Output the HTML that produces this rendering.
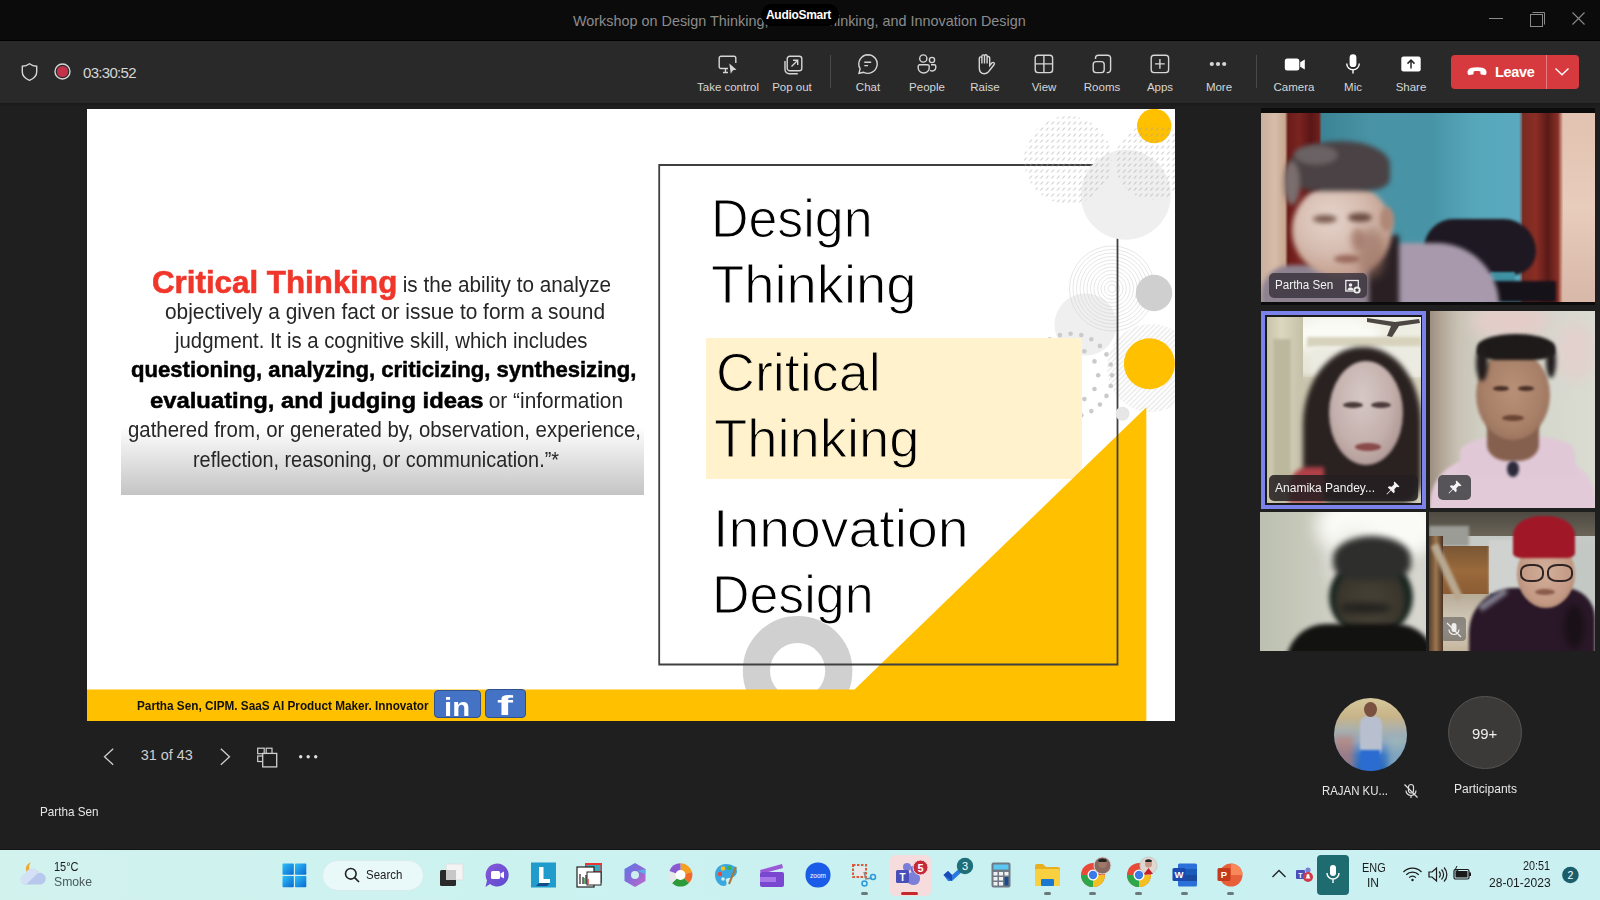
<!DOCTYPE html>
<html><head><meta charset="utf-8">
<style>
*{margin:0;padding:0;box-sizing:border-box}
html,body{width:1600px;height:900px;overflow:hidden;background:#1f1f1f;font-family:"Liberation Sans",sans-serif}
.a{position:absolute}
#title{left:0;top:0;width:1600px;height:41px;background:#0b0b0b;border-bottom:1px solid #000}
#toolbar{left:0;top:41px;width:1600px;height:62px;background:#292929}
.tl{position:absolute;top:81px;color:#d6d6d6;font-size:11.5px;white-space:nowrap;transform:translateX(-50%)}
.ic{position:absolute;top:52px;width:24px;height:24px;transform:translateX(-50%)}
#slide{left:87px;top:109px;width:1088px;height:612px;background:#fff;overflow:hidden}
.tile{position:absolute;overflow:hidden}
#taskbar{left:0;top:850px;width:1600px;height:50px;background:linear-gradient(90deg,#d9efef,#cdeff0 50%,#d3eff1)}
</style></head><body>

<div id="title" class="a">
 <div class="a" style="left:573px;top:12.5px;font-size:14.4px;color:#8c8c8c;white-space:nowrap">Workshop on Design Thinking, Critical Thinking, and Innovation Design</div>
 <div class="a" style="left:761px;top:4px;width:78px;height:22px;border-radius:11px;background:#000"></div>
 <div class="a" style="left:766px;top:8px;font-size:12px;font-weight:bold;color:#fff;letter-spacing:-0.3px">AudioSmart</div>
 <svg class="a" style="left:1480px;top:8px" width="110" height="24" viewBox="0 0 110 24">
  <line x1="9" y1="10.5" x2="23" y2="10.5" stroke="#8a8a8a" stroke-width="1"/>
  <rect x="50.5" y="6.5" width="12" height="12" fill="none" stroke="#8a8a8a" stroke-width="1"/>
  <path d="M52.5 4.5 H64.5 V16.5" fill="none" stroke="#8a8a8a" stroke-width="1"/>
  <path d="M92.5 4.5 L104.5 16.5 M104.5 4.5 L92.5 16.5" stroke="#8a8a8a" stroke-width="1.1"/>
 </svg>
</div>
<div id="toolbar" class="a"></div>
<div id="tbshadow" class="a" style="left:0;top:103px;width:1600px;height:4px;background:linear-gradient(180deg,#191919,#1f1f1f)"></div>
<svg class="a" style="left:20px;top:62px" width="20" height="20" viewBox="0 0 20 20"><path d="M9.5 1.8 C7.5 3.3 5 4.2 2.3 4.2 V10 C2.3 14 5 16.5 9.5 18.3 C14 16.5 16.7 14 16.7 10 V4.2 C14 4.2 11.5 3.3 9.5 1.8Z" stroke="#d6d6d6" stroke-width="1.4" fill="none"/></svg>
<svg class="a" style="left:52px;top:61px" width="22" height="22" viewBox="0 0 22 22"><circle cx="10.5" cy="10.5" r="7.5" stroke="#d6d6d6" stroke-width="1.4" fill="none" stroke-width="1.6"/><circle cx="10.5" cy="10.5" r="5.6" fill="#c4314b"/></svg>
<div class="a" style="left:83px;top:64px;font-size:15px;color:#d6d6d6;letter-spacing:-0.7px">03:30:52</div>
<svg class="a" style="left:717px;top:54px" width="22" height="22" viewBox="0 0 22 22"><path d="M11 14.5 H4 a1.8 1.8 0 0 1 -1.8 -1.8 V4 a1.8 1.8 0 0 1 1.8 -1.8 H17 a1.8 1.8 0 0 1 1.8 1.8 V9" stroke="#d6d6d6" stroke-width="1.4" fill="none"/><path d="M6 18.5 H11 M8.5 14.5 V18.5" stroke="#d6d6d6" stroke-width="1.4" fill="none"/><path d="M12.3 9.5 L19.5 15.8 L16 16.2 L13.8 19.8 Z" fill="#d6d6d6"/></svg>
<svg class="a" style="left:782px;top:54px" width="22" height="22" viewBox="0 0 22 22"><rect x="5.2" y="2.2" width="14.6" height="14.6" rx="2.6" stroke="#d6d6d6" stroke-width="1.4" fill="none"/><path d="M3 7 V15.5 a4.2 4.2 0 0 0 4.2 4.2 H15.8" stroke="#d6d6d6" stroke-width="1.4" fill="none"/><path d="M9.5 12.5 L15.5 6.5 M11 6.3 H15.7 V11" stroke="#d6d6d6" stroke-width="1.4" fill="none"/></svg>
<div class="a" style="left:830px;top:55px;width:1px;height:33px;background:#4a4a4a"></div>
<svg class="a" style="left:857px;top:53px" width="22" height="22" viewBox="0 0 22 22"><path d="M11 1.7 a9.3 9.3 0 1 1 -4.3 17.6 L2 20.3 L3.1 15.7 A9.3 9.3 0 0 1 11 1.7Z" stroke="#d6d6d6" stroke-width="1.4" fill="none"/><path d="M7.3 9.2 H14.2 M7.3 12.6 H11" stroke="#d6d6d6" stroke-width="1.4" fill="none"/></svg>
<svg class="a" style="left:916px;top:53px" width="22" height="22" viewBox="0 0 22 22"><circle cx="7.3" cy="5.5" r="3.6" stroke="#d6d6d6" stroke-width="1.4" fill="none"/><circle cx="16" cy="7" r="2.6" stroke="#d6d6d6" stroke-width="1.4" fill="none"/><path d="M3 11.7 H11.6 a1.6 1.6 0 0 1 1.6 1.6 V15 a5.5 5 0 0 1 -11 0 V13.3 a1.6 1.6 0 0 1 1.6 -1.6Z" stroke="#d6d6d6" stroke-width="1.4" fill="none"/><path d="M15 11.7 H18.2 a1.6 1.6 0 0 1 1.6 1.6 V14.5 a3.6 3.5 0 0 1 -5.8 2.8" stroke="#d6d6d6" stroke-width="1.4" fill="none"/></svg>
<svg class="a" style="left:974px;top:53px" width="22" height="22" viewBox="0 0 22 22"><path d="M5.3 12.5 V5.2 a1.3 1.3 0 0 1 2.6 0 V10.5 V3.2 a1.3 1.3 0 0 1 2.6 0 V10.5 V3 a1.3 1.3 0 0 1 2.6 0 V10.5 V4.8 a1.3 1.3 0 0 1 2.6 0 V12.5 L18 9.8 a1.4 1.4 0 0 1 2 2 L15.5 17.5 C14.3 19.5 12.7 20.7 10.5 20.7 C7.2 20.7 5.3 18.3 5.3 15 Z" stroke="#d6d6d6" stroke-width="1.4" fill="none" stroke-width="1.3"/></svg>
<svg class="a" style="left:1033px;top:53px" width="22" height="22" viewBox="0 0 22 22"><rect x="2.2" y="2.2" width="17.4" height="17.4" rx="2.8" stroke="#d6d6d6" stroke-width="1.4" fill="none"/><path d="M10.9 2.2 V19.6 M2.2 10.9 H19.6" stroke="#d6d6d6" stroke-width="1.4" fill="none"/></svg>
<svg class="a" style="left:1091px;top:53px" width="22" height="22" viewBox="0 0 22 22"><path d="M4.5 6 V5 a2.8 2.8 0 0 1 2.8 -2.8 H16.8 a2.8 2.8 0 0 1 2.8 2.8 V16.8 a2.8 2.8 0 0 1 -2.8 2.8 H15.6" stroke="#d6d6d6" stroke-width="1.4" fill="none"/><rect x="2.2" y="8.6" width="11" height="11" rx="2.8" stroke="#d6d6d6" stroke-width="1.4" fill="none"/></svg>
<svg class="a" style="left:1149px;top:53px" width="22" height="22" viewBox="0 0 22 22"><rect x="2.2" y="2.2" width="17.4" height="17.4" rx="2.8" stroke="#d6d6d6" stroke-width="1.4" fill="none"/><path d="M10.9 6 V15.8 M6 10.9 H15.8" stroke="#d6d6d6" stroke-width="1.4" fill="none" stroke-width="1.6"/></svg>
<svg class="a" style="left:1207px;top:53px" width="22" height="22" viewBox="0 0 22 22"><circle cx="4.8" cy="11" r="2.1" fill="#d6d6d6"/><circle cx="11" cy="11" r="2.1" fill="#d6d6d6"/><circle cx="17.2" cy="11" r="2.1" fill="#d6d6d6"/></svg>
<div class="a" style="left:1256px;top:55px;width:1px;height:33px;background:#4a4a4a"></div>
<svg class="a" style="left:1283px;top:53px" width="24" height="22" viewBox="0 0 24 22"><rect x="1.8" y="5.5" width="14.5" height="12" rx="2.5" fill="#ffffff"/><path d="M17.2 9.3 L21.8 6.5 V16.5 L17.2 13.7 Z" fill="#ffffff"/></svg>
<svg class="a" style="left:1342px;top:53px" width="22" height="22" viewBox="0 0 22 22"><rect x="7.6" y="1.3" width="6.8" height="12.8" rx="3.4" fill="#ffffff"/><path d="M4.7 10.5 a6.3 6.3 0 0 0 12.6 0 M11 16.8 V20.5" stroke="#ffffff" stroke-width="1.4" fill="none"/></svg>
<svg class="a" style="left:1400px;top:53px" width="22" height="22" viewBox="0 0 22 22"><rect x="1.3" y="3.5" width="19.4" height="15" rx="2.2" fill="#ffffff"/><path d="M11 15.5 V7.3 M7.5 10.6 L11 7.1 L14.5 10.6" stroke="#292929" stroke-width="1.5" fill="none"/></svg>
<div class="tl" style="left:728px">Take control</div>
<div class="tl" style="left:792px">Pop out</div>
<div class="tl" style="left:868px">Chat</div>
<div class="tl" style="left:927px">People</div>
<div class="tl" style="left:985px">Raise</div>
<div class="tl" style="left:1044px">View</div>
<div class="tl" style="left:1102px">Rooms</div>
<div class="tl" style="left:1160px">Apps</div>
<div class="tl" style="left:1219px">More</div>
<div class="tl" style="left:1294px">Camera</div>
<div class="tl" style="left:1353px">Mic</div>
<div class="tl" style="left:1411px">Share</div>
<div class="a" style="left:1451px;top:55px;width:128px;height:34px;border-radius:4px;background:#d73a3e"></div>
<div class="a" style="left:1546px;top:55px;width:1px;height:34px;background:#e8797b"></div>
<svg class="a" style="left:1465px;top:63px" width="24" height="18" viewBox="0 0 24 18"><path d="M2.5 9.8 C2 7.6 3.8 5.5 6.5 4.8 C9.8 3.9 14.2 3.9 17.5 4.8 C20.2 5.5 22 7.6 21.5 9.8 L21.2 11 C21 11.8 20.2 12.3 19.4 12.1 L16.6 11.6 C15.9 11.5 15.4 10.9 15.4 10.2 L15.4 8.5 C13.3 7.9 10.7 7.9 8.6 8.5 L8.6 10.2 C8.6 10.9 8.1 11.5 7.4 11.6 L4.6 12.1 C3.8 12.3 3 11.8 2.8 11 Z" fill="#fff"/></svg>
<div class="a" style="left:1495px;top:64px;font-size:14.5px;font-weight:bold;color:#fff;letter-spacing:-0.3px">Leave</div>
<svg class="a" style="left:1553px;top:66px" width="18" height="12" viewBox="0 0 18 12"><path d="M2.5 2.5 L9 8.8 L15.5 2.5" stroke="#fff" stroke-width="1.4" fill="none"/></svg>
<div id="slide" class="a">
<div class="a" style="left:34px;top:150px;width:523px;height:235.5px;background:linear-gradient(180deg,#fff 0%,#fff 71%,#eeeeee 79%,#d8d8d8 90%,#c4c4c4 100%)"></div>
<div class="a" style="left:64.7px;top:156.9px;font-size:32px;line-height:32px;font-weight:bold;color:#f0362a;white-space:pre;transform:scaleX(0.9785);transform-origin:0 0;-webkit-text-stroke:0.6px #f0362a;">Critical Thinking</div>
<div class="a" style="left:310.0px;top:165.4px;font-size:22px;line-height:22px;font-weight:normal;color:#262626;white-space:pre;transform:scaleX(0.9408);transform-origin:0 0;"> is the ability to analyze</div>
<div class="a" style="left:78.0px;top:191.7px;font-size:22px;line-height:22px;font-weight:normal;color:#262626;white-space:pre;transform:scaleX(0.9494);transform-origin:0 0;">objectively a given fact or issue to form a sound</div>
<div class="a" style="left:88.3px;top:220.7px;font-size:22px;line-height:22px;font-weight:normal;color:#262626;white-space:pre;transform:scaleX(0.9242);transform-origin:0 0;">judgment. It is a cognitive skill, which includes</div>
<div class="a" style="left:43.6px;top:250.4px;font-size:22px;line-height:22px;font-weight:bold;color:#000;white-space:pre;transform:scaleX(1.0035);transform-origin:0 0;-webkit-text-stroke:0.5px #000;">questioning, analyzing, criticizing, synthesizing,</div>
<div class="a" style="left:62.5px;top:281.4px;font-size:22px;line-height:22px;font-weight:bold;color:#000;white-space:pre;transform:scaleX(1.0826);transform-origin:0 0;-webkit-text-stroke:0.5px #000;">evaluating, and judging ideas</div>
<div class="a" style="left:396.0px;top:280.9px;font-size:22px;line-height:22px;font-weight:normal;color:#262626;white-space:pre;transform:scaleX(0.9463);transform-origin:0 0;"> or “information</div>
<div class="a" style="left:40.9px;top:310.0px;font-size:22px;line-height:22px;font-weight:normal;color:#262626;white-space:pre;transform:scaleX(0.9267);transform-origin:0 0;">gathered from, or generated by, observation, experience,</div>
<div class="a" style="left:105.5px;top:340.4px;font-size:22px;line-height:22px;font-weight:normal;color:#262626;white-space:pre;transform:scaleX(0.9015);transform-origin:0 0;">reflection, reasoning, or communication.”*</div>
<svg class="a" style="left:0;top:0" width="1088" height="612" viewBox="87 109 1088 612"><defs><pattern id="hatch1" width="5.5" height="6" patternUnits="userSpaceOnUse"><line x1="1" y1="4.6" x2="3.4" y2="1.6" stroke="#a0a0a0" stroke-width="0.9"/></pattern><pattern id="hatch2" width="3.6" height="3.6" patternUnits="userSpaceOnUse" patternTransform="rotate(-45)"><line x1="0" y1="1.8" x2="3.6" y2="1.8" stroke="#d4d4d4" stroke-width="0.7"/></pattern></defs><circle cx="1151" cy="368" r="44" fill="url(#hatch2)"/><circle cx="1085.5" cy="324.5" r="31" fill="#efefef"/><circle cx="1112" cy="288.5" r="4" fill="none" stroke="#d2d2d2" stroke-width="0.55"/><circle cx="1112" cy="288.5" r="7.5" fill="none" stroke="#d2d2d2" stroke-width="0.55"/><circle cx="1112" cy="288.5" r="11" fill="none" stroke="#d2d2d2" stroke-width="0.55"/><circle cx="1112" cy="288.5" r="14.5" fill="none" stroke="#d2d2d2" stroke-width="0.55"/><circle cx="1112" cy="288.5" r="18" fill="none" stroke="#d2d2d2" stroke-width="0.55"/><circle cx="1112" cy="288.5" r="21.5" fill="none" stroke="#d2d2d2" stroke-width="0.55"/><circle cx="1112" cy="288.5" r="25" fill="none" stroke="#d2d2d2" stroke-width="0.55"/><circle cx="1112" cy="288.5" r="28.5" fill="none" stroke="#d2d2d2" stroke-width="0.55"/><circle cx="1112" cy="288.5" r="32" fill="none" stroke="#d2d2d2" stroke-width="0.55"/><circle cx="1112" cy="288.5" r="35.5" fill="none" stroke="#d2d2d2" stroke-width="0.55"/><circle cx="1112" cy="288.5" r="39" fill="none" stroke="#d2d2d2" stroke-width="0.55"/><circle cx="1112" cy="288.5" r="42.5" fill="none" stroke="#d2d2d2" stroke-width="0.55"/><circle cx="1112.1" cy="375.2" r="2.3" fill="#cacaca"/><circle cx="1110.7" cy="385.9" r="2.3" fill="#cacaca"/><circle cx="1106.5" cy="395.9" r="2.3" fill="#cacaca"/><circle cx="1099.9" cy="404.5" r="2.3" fill="#cacaca"/><circle cx="1091.3" cy="411.1" r="2.3" fill="#cacaca"/><circle cx="1081.3" cy="415.3" r="2.3" fill="#cacaca"/><circle cx="1070.6" cy="416.7" r="2.3" fill="#cacaca"/><circle cx="1059.9" cy="415.3" r="2.3" fill="#cacaca"/><circle cx="1049.8" cy="411.1" r="2.3" fill="#cacaca"/><circle cx="1041.3" cy="404.5" r="2.3" fill="#cacaca"/><circle cx="1034.7" cy="395.9" r="2.3" fill="#cacaca"/><circle cx="1030.5" cy="385.9" r="2.3" fill="#cacaca"/><circle cx="1029.1" cy="375.2" r="2.3" fill="#cacaca"/><circle cx="1030.5" cy="364.5" r="2.3" fill="#cacaca"/><circle cx="1034.7" cy="354.4" r="2.3" fill="#cacaca"/><circle cx="1041.3" cy="345.9" r="2.3" fill="#cacaca"/><circle cx="1049.8" cy="339.3" r="2.3" fill="#cacaca"/><circle cx="1059.9" cy="335.1" r="2.3" fill="#cacaca"/><circle cx="1070.6" cy="333.7" r="2.3" fill="#cacaca"/><circle cx="1081.3" cy="335.1" r="2.3" fill="#cacaca"/><circle cx="1091.3" cy="339.3" r="2.3" fill="#cacaca"/><circle cx="1099.9" cy="345.9" r="2.3" fill="#cacaca"/><circle cx="1106.5" cy="354.4" r="2.3" fill="#cacaca"/><circle cx="1110.7" cy="364.5" r="2.3" fill="#cacaca"/><circle cx="1098.2" cy="375.2" r="2.3" fill="#cacaca"/><circle cx="1094.5" cy="389.0" r="2.3" fill="#cacaca"/><circle cx="1084.4" cy="399.1" r="2.3" fill="#cacaca"/><circle cx="1070.6" cy="402.8" r="2.3" fill="#cacaca"/><circle cx="1056.8" cy="399.1" r="2.3" fill="#cacaca"/><circle cx="1046.7" cy="389.0" r="2.3" fill="#cacaca"/><circle cx="1043.0" cy="375.2" r="2.3" fill="#cacaca"/><circle cx="1046.7" cy="361.4" r="2.3" fill="#cacaca"/><circle cx="1056.8" cy="351.3" r="2.3" fill="#cacaca"/><circle cx="1070.6" cy="347.6" r="2.3" fill="#cacaca"/><circle cx="1084.4" cy="351.3" r="2.3" fill="#cacaca"/><circle cx="1094.5" cy="361.4" r="2.3" fill="#cacaca"/></svg>
<div class="a" style="left:619px;top:229px;width:376px;height:141px;background:#fff2cc"></div>
<svg class="a" style="left:0;top:0" width="1088" height="612" viewBox="87 109 1088 612"><circle cx="797.6" cy="670.7" r="41.2" fill="none" stroke="#d0d0d0" stroke-width="27.2"/><path d="M87 689.4 H854.5 L1146.3 407.3 V721 H87 Z" fill="#ffc000"/><path d="M659.2 165 V664.5 H1117.5 V165 Z" fill="none" stroke="#404040" stroke-width="1.8"/><circle cx="1125.8" cy="194.8" r="45" fill="#efefef"/><circle cx="1154.2" cy="126" r="17.2" fill="#ffc000"/><circle cx="1068" cy="160" r="44" fill="url(#hatch1)" opacity="0.8"/><circle cx="1153" cy="162" r="38" fill="url(#hatch1)" opacity="0.8"/><circle cx="1154" cy="293" r="18.2" fill="#cfcfcf"/><circle cx="1149.4" cy="363.7" r="25.5" fill="#ffc000"/><circle cx="1122.5" cy="413.8" r="7" fill="#e6e6e6"/></svg>
<div class="a" style="left:623.6px;top:82.3px;font-size:54.2px;line-height:54.2px;font-weight:normal;color:#000;white-space:pre;transform:scaleX(0.9581);transform-origin:0 0;-webkit-text-stroke:1.1px #fff;">Design</div>
<div class="a" style="left:623.6px;top:148.1px;font-size:54.2px;line-height:54.2px;font-weight:normal;color:#000;white-space:pre;transform:scaleX(1.0038);transform-origin:0 0;-webkit-text-stroke:1.1px #fff;">Thinking</div>
<div class="a" style="left:628.6px;top:235.8px;font-size:54.2px;line-height:54.2px;font-weight:normal;color:#000;white-space:pre;transform:scaleX(0.9941);transform-origin:0 0;-webkit-text-stroke:1.1px #fff2cc;">Critical</div>
<div class="a" style="left:626.6px;top:302.4px;font-size:54.2px;line-height:54.2px;font-weight:normal;color:#000;white-space:pre;transform:scaleX(1.0038);transform-origin:0 0;-webkit-text-stroke:1.1px #fff2cc;">Thinking</div>
<div class="a" style="left:625.9px;top:392.2px;font-size:54.2px;line-height:54.2px;font-weight:normal;color:#000;white-space:pre;transform:scaleX(1.0221);transform-origin:0 0;-webkit-text-stroke:1.1px #fff;">Innovation</div>
<div class="a" style="left:624.6px;top:458.2px;font-size:54.2px;line-height:54.2px;font-weight:normal;color:#000;white-space:pre;transform:scaleX(0.9581);transform-origin:0 0;-webkit-text-stroke:1.1px #fff;">Design</div>
<div class="a" style="left:50.0px;top:590.8px;font-size:12px;line-height:12px;font-weight:bold;color:#111;white-space:pre;transform:scaleX(0.9796);transform-origin:0 0;">Partha Sen, CIPM. SaaS AI Product Maker. Innovator</div>
<div class="a" style="left:347px;top:581px;width:47px;height:28px;border-radius:4px;background:#4472c4;border:1px solid #2f528f"></div>
<div class="a" style="left:398px;top:580px;width:41px;height:29px;border-radius:4px;background:#4472c4;border:1px solid #2f528f"></div>
<div class="a" style="left:357.0px;top:585.0px;font-size:26px;line-height:26px;font-weight:bold;color:#fff;white-space:pre;transform:scaleX(1.1253);transform-origin:0 0;">in</div>
<div class="a" style="left:410.0px;top:583.3px;font-size:28px;line-height:28px;font-weight:bold;color:#fff;white-space:pre;transform:scaleX(1.7160);transform-origin:0 0;">f</div>
</div>
<svg class="a" style="left:100px;top:745px" width="20" height="24" viewBox="0 0 20 24"><path d="M13.2 3.8 L4.5 11.8 L13.2 19.8" stroke="#d0d0d0" stroke-width="1.3" fill="none"/></svg>
<div class="a" style="left:140.7px;top:747.5px;font-size:14.4px;line-height:14.4px;font-weight:normal;color:#cfcfcf;white-space:pre;">31 of 43</div>
<svg class="a" style="left:216px;top:745px" width="20" height="24" viewBox="0 0 20 24"><path d="M4.8 3.8 L13.5 11.8 L4.8 19.8" stroke="#d0d0d0" stroke-width="1.3" fill="none"/></svg>
<svg class="a" style="left:255px;top:746px" width="24" height="24" viewBox="0 0 24 24"><rect x="2.7" y="2.2" width="6.5" height="5.5" fill="none" stroke="#d0d0d0" stroke-width="1.2"/><rect x="11.2" y="2.2" width="5.8" height="5.5" fill="none" stroke="#d0d0d0" stroke-width="1.2"/><rect x="2.7" y="10" width="6.5" height="5.5" fill="none" stroke="#d0d0d0" stroke-width="1.2"/><rect x="7.7" y="7.4" width="14" height="13.5" fill="#1f1f1f" stroke="#d0d0d0" stroke-width="1.3"/></svg>
<svg class="a" style="left:296px;top:752px" width="24" height="10" viewBox="0 0 24 10"><circle cx="4.7" cy="4.7" r="1.7" fill="#e0e0e0"/><circle cx="12.2" cy="4.7" r="1.7" fill="#e0e0e0"/><circle cx="19.7" cy="4.7" r="1.7" fill="#e0e0e0"/></svg>
<div class="a" style="left:39.5px;top:805.3px;font-size:13px;line-height:13px;font-weight:normal;color:#e6e6e6;white-space:pre;transform:scaleX(0.8994);transform-origin:0 0;">Partha Sen</div>
<div class="tile" style="left:1261px;top:108px;width:334px;height:197px;background:#0c0c0c">
<div class="tile" style="left:0;top:5px;width:334px;height:189px;background:linear-gradient(90deg,#ccb09e 0,#d8bcaa 14px,#c8a890 24px,#6a1c1a 27px,#7a2420 38px,#5a1616 50px,#6e201c 58px,#3e8c9e 61px,#4896aa 110px,#3f8fa2 170px,#4aa0b6 215px,#48a0b8 258px,#7a2a22 262px,#8a2e24 275px,#5a1a18 287px,#8a3026 297px,#e0c0ae 302px,#e4c8b8 334px)">
<div class="a" style="left:302px;top:0px;width:32px;height:189px;background:linear-gradient(180deg,#e2c2b0,#e8ccbc 50%,#d8b8a8)"></div>
<div class="a" style="left:61px;top:0px;width:200px;height:189px;background:linear-gradient(90deg,rgba(0,0,0,0.06),rgba(255,255,255,0.05) 60%,rgba(255,255,255,0.1))"></div>
<div class="a" style="left:163px;top:106px;width:112px;height:56px;background:#1e1822;border-radius:50px 55px 40px 30px;filter:blur(1.5px)"></div>
<div class="a" style="left:229px;top:159px;width:25px;height:12px;background:#3e92a4;filter:blur(1px)"></div>
<div class="a" style="left:225px;top:168px;width:70px;height:21px;background:#16121a;filter:blur(1.5px)"></div>
<div class="a" style="left:116px;top:130px;width:122px;height:62px;background:#a89aac;border-radius:30px 70px 0 0;filter:blur(2px)"></div>
<div class="a" style="left:0px;top:152px;width:130px;height:45px;background:#8e8290;border-radius:30px 30px 0 0;filter:blur(2px)"></div>
<div class="a" style="left:108px;top:122px;width:30px;height:72px;background:#2a2024;filter:blur(2.5px)"></div>
<div class="a" style="left:31px;top:69px;width:100px;height:96px;background:radial-gradient(ellipse at 38% 38%,#e6d4cc 0,#d6bcb0 40%,#c09a88 75%,#a07868 100%);border-radius:50%;filter:blur(2.5px);"></div>
<div class="a" style="left:119px;top:94px;width:14px;height:24px;background:#b08878;border-radius:50%;filter:blur(2px);"></div>
<div class="a" style="left:52px;top:102px;width:24px;height:8px;background:#7a5a50;border-radius:50%;filter:blur(2.5px);"></div>
<div class="a" style="left:87px;top:99.5px;width:24px;height:9.0px;background:#6a4a40;border-radius:50%;filter:blur(2.5px);"></div>
<div class="a" style="left:90px;top:115px;width:14px;height:22px;background:#b08878;border-radius:50%;filter:blur(3px);"></div>
<div class="a" style="left:73px;top:142px;width:26px;height:8px;background:#9a6a5c;border-radius:50%;filter:blur(2px);"></div>
<div class="a" style="left:96px;top:115px;width:28px;height:50px;background:rgba(150,110,95,0.6);border-radius:50%;filter:blur(5px);"></div>
<div class="a" style="left:27px;top:28px;width:102px;height:50px;background:#4a4244;border-radius:55% 50% 25% 30%;filter:blur(2.5px)"></div>
<div class="a" style="left:33px;top:32px;width:44px;height:20px;background:#6a6264;border-radius:50%;filter:blur(2.5px);"></div>
<div class="a" style="left:23px;top:48px;width:16px;height:44px;background:#7a6e6e;border-radius:50%;filter:blur(2.5px);"></div>
</div>
</div>
<div class="a" style="left:1269px;top:273px;width:98px;height:25px;background:rgba(56,50,58,0.82);border-radius:5px"></div>
<div class="a" style="left:1275.2px;top:279.4px;font-size:12.5px;line-height:12.5px;font-weight:normal;color:#f2f2f2;white-space:pre;transform:scaleX(0.9322);transform-origin:0 0;">Partha Sen</div>
<svg class="a" style="left:1344px;top:278px" width="18" height="17" viewBox="0 0 18 17"><rect x="1.8" y="2.5" width="12.5" height="10.5" fill="none" stroke="#eee" stroke-width="1.3"/><circle cx="6.5" cy="7" r="1.8" fill="#eee"/><path d="M3.5 12 C3.8 10 5 9.5 6.5 9.5 C8 9.5 9 10 9.5 12Z" fill="#eee"/><circle cx="13" cy="12" r="3.6" fill="#eee"/><path d="M13 9.8 L13.7 11.3 L15.3 11.4 L14.1 12.5 L14.4 14.1 L13 13.3 L11.6 14.1 L11.9 12.5 L10.7 11.4 L12.3 11.3Z" fill="#333"/></svg>
<div class="a" style="left:1261px;top:311px;width:165px;height:197.5px;background:#7b83eb"></div>
<div class="a" style="left:1265px;top:315px;width:157px;height:189.5px;background:#1a1a1a"></div>
<div class="tile" style="left:1267px;top:317px;width:154px;height:186px;background:#d4d0bc">
<div class="a" style="left:0px;top:0px;width:154px;height:60px;background:linear-gradient(180deg,#f0f0e6,#e6e4d6)"></div>
<div class="a" style="left:25px;top:0px;width:90px;height:36px;background:#fbfbf6;border-radius:50%;filter:blur(6px);"></div>
<div class="a" style="left:40px;top:20px;width:114px;height:10px;background:#d6d2bc;filter:blur(1.5px)"></div>
<div class="a" style="left:44px;top:30px;width:110px;height:30px;background:#ecebe2;filter:blur(2px)"></div>
<div class="a" style="left:0px;top:0px;width:36px;height:186px;background:linear-gradient(90deg,#c8c4a8,#dcd8c0 40%,#c4c0a8)"></div>
<div class="a" style="left:6px;top:22px;width:18px;height:164px;background:#bcb89e;filter:blur(1.5px)"></div>
<div class="a" style="left:30px;top:60px;width:40px;height:126px;background:#c8c4ac;filter:blur(3px)"></div>
<svg class="a" style="left:100px;top:0" width="54" height="28" viewBox="0 0 54 28"><path d="M0 1 L28 5 L52 2 L53 6 L32 9 L25 20 L20 19 L24 9 L0 5Z" fill="#3a3430" opacity="0.9"/></svg>
<div class="a" style="left:36px;top:30px;width:118px;height:156px;background:#2a2220;border-radius:50% 48% 15% 25%;filter:blur(2.5px)"></div>
<div class="a" style="left:22px;top:150px;width:35px;height:36px;background:#b04048;border-radius:20px 0 0 0;filter:blur(2px)"></div>
<div class="a" style="left:62px;top:44px;width:74px;height:104px;background:radial-gradient(ellipse at 45% 35%,#d6c8c6 0,#c4b0ac 50%,#a08684 100%);border-radius:50%;filter:blur(1.5px);"></div>
<div class="a" style="left:76px;top:85px;width:20px;height:6px;background:#4a3a3a;border-radius:50%;filter:blur(1px);"></div>
<div class="a" style="left:104px;top:85px;width:20px;height:6px;background:#4a3a3a;border-radius:50%;filter:blur(1px);"></div>
<div class="a" style="left:88px;top:126px;width:26px;height:8px;background:#8a4a4a;border-radius:50%;filter:blur(1px);"></div>
</div>
<div class="a" style="left:1269px;top:474.5px;width:149px;height:26px;background:rgba(36,32,34,0.86);border-radius:5px"></div>
<div class="a" style="left:1275.0px;top:482.4px;font-size:12.5px;line-height:12.5px;font-weight:normal;color:#f2f2f2;white-space:pre;transform:scaleX(0.9616);transform-origin:0 0;">Anamika Pandey...</div>
<svg class="a" style="left:1385px;top:480px" width="16" height="16" viewBox="0 0 16 16"><path d="M9.5 1.5 L14.5 6.5 L13.3 7.3 L11.8 6.8 L9.3 9.3 L9.8 12 L8.6 13.2 L6 10.5 L2 14.5 L1.5 14 L5.5 10 L2.8 7.4 L4 6.2 L6.7 6.7 L9.2 4.2 L8.7 2.7Z" fill="#f4f4f4"/></svg>
<div class="tile" style="left:1430px;top:311px;width:165px;height:197px;background:linear-gradient(90deg,#9c8e80 0,#b4a898 12px,#c8c2b4 28px,#d2d4c8 60px,#d6d8ce 120px,#dadcd2 165px)">
<div class="a" style="left:40px;top:-8px;width:80px;height:36px;background:#e4ccc8;border-radius:50%;filter:blur(8px);"></div>
<div class="a" style="left:125px;top:10px;width:40px;height:60px;background:#e2d0cc;border-radius:50%;filter:blur(8px);"></div>
<div class="a" style="left:0px;top:148px;width:165px;height:55px;background:#e2cad8;border-radius:45px 40px 0 0;filter:blur(1.5px)"></div>
<div class="a" style="left:30px;top:125px;width:115px;height:40px;background:#e0c8d6;border-radius:40% 40% 0 0;filter:blur(1.5px)"></div>
<div class="a" style="left:57px;top:110px;width:52px;height:40px;background:#86604e;border-radius:0 0 40% 40%;filter:blur(1.5px)"></div>
<div class="a" style="left:77px;top:150px;width:12px;height:16px;background:#2a2a3a;border-radius:50%;filter:blur(1.5px);"></div>
<div class="a" style="left:46px;top:39px;width:74px;height:90px;background:radial-gradient(ellipse at 50% 45%,#b89078 0,#a88068 55%,#8a6452 100%);border-radius:50%;filter:blur(1.5px);"></div>
<div class="a" style="left:63px;top:74.5px;width:16px;height:5.0px;background:#4a3028;border-radius:50%;filter:blur(1px);"></div>
<div class="a" style="left:88px;top:74.5px;width:16px;height:5.0px;background:#4a3028;border-radius:50%;filter:blur(1px);"></div>
<div class="a" style="left:72px;top:104px;width:22px;height:6px;background:#6a4434;border-radius:50%;filter:blur(1px);"></div>
<div class="a" style="left:47px;top:23px;width:78px;height:26px;background:#1e1a1a;border-radius:50% 50% 30% 30%;filter:blur(1.5px)"></div>
<div class="a" style="left:46px;top:34px;width:12px;height:36px;background:#221c1c;border-radius:50%;filter:blur(2px);"></div>
<div class="a" style="left:116px;top:33px;width:10px;height:34px;background:#221c1c;border-radius:50%;filter:blur(2px);"></div>
</div>
<div class="a" style="left:1438px;top:474.5px;width:33px;height:25px;background:rgba(74,74,78,0.92);border-radius:5px"></div>
<svg class="a" style="left:1447px;top:479px" width="16" height="16" viewBox="0 0 16 16"><path d="M9.5 1.5 L14.5 6.5 L13.3 7.3 L11.8 6.8 L9.3 9.3 L9.8 12 L8.6 13.2 L6 10.5 L2 14.5 L1.5 14 L5.5 10 L2.8 7.4 L4 6.2 L6.7 6.7 L9.2 4.2 L8.7 2.7Z" fill="#f4f4f4"/></svg>
<div class="tile" style="left:1260px;top:512px;width:166px;height:139px;background:linear-gradient(90deg,#bcc0b0 0,#c6c8ba 40px,#d0d0c6 75px,#d8d8d0 130px,#d2d2ca 166px)">
<div class="a" style="left:56px;top:-24px;width:124px;height:76px;background:#fafaf6;border-radius:50%;filter:blur(8px);"></div>
<div class="a" style="left:70px;top:20px;width:50px;height:60px;background:#e8e8e2;border-radius:50%;filter:blur(8px);"></div>
<div class="a" style="left:130px;top:50px;width:36px;height:80px;background:#d6d6ce;filter:blur(4px)"></div>
<div class="a" style="left:69px;top:45px;width:84px;height:80px;background:#1a2620;border-radius:50%;filter:blur(2.5px);"></div>
<div class="a" style="left:75px;top:52px;width:70px;height:72px;background:radial-gradient(ellipse at 50% 60%,#4a4438 0,#3c382e 55%,#2e2c28 100%);border-radius:50%;filter:blur(2.5px);"></div>
<div class="a" style="left:73px;top:24px;width:78px;height:44px;background:#2e2e2c;border-radius:50% 50% 35% 35%;filter:blur(3px)"></div>
<div class="a" style="left:79px;top:90px;width:52px;height:12px;background:#262420;border-radius:50%;filter:blur(3px);"></div>
<div class="a" style="left:26px;top:112px;width:150px;height:40px;background:#121210;border-radius:40px 40px 0 0;filter:blur(2px)"></div>
</div>
<div class="tile" style="left:1429px;top:512px;width:166px;height:139px;background:#c6cac6">
<div class="a" style="left:0px;top:0px;width:166px;height:24px;background:linear-gradient(180deg,#4e4a42,#6a6458)"></div>
<div class="a" style="left:0px;top:14px;width:40px;height:20px;background:#9c9c96;filter:blur(1.5px)"></div>
<div class="a" style="left:12px;top:34px;width:48px;height:50px;background:linear-gradient(180deg,#7a5634,#9a6a3c 50%,#8a5a32)"></div>
<div class="a" style="left:12px;top:82px;width:48px;height:57px;background:linear-gradient(180deg,#b8ac98,#d8d0c0 60%,#c4b49c)"></div>
<div class="a" style="left:0px;top:24px;width:14px;height:115px;background:linear-gradient(90deg,#5a3e28,#9a7650 50%,#4a3020)"></div>
<div class="a" style="left:14px;top:30px;width:8px;height:60px;background:#b8a890;transform:rotate(-25deg);filter:blur(1.5px)"></div>
<div class="a" style="left:60px;top:28px;width:32px;height:70px;background:#cfd2ce;filter:blur(1px)"></div>
<div class="a" style="left:61px;top:82px;width:22px;height:14px;background:#2a7272;filter:blur(1px)"></div>
<div class="a" style="left:140px;top:30px;width:26px;height:70px;background:#c4c8c4;filter:blur(1px)"></div>
<div class="a" style="left:40px;top:76px;width:126px;height:66px;background:#2a1828;border-radius:45px 30px 0 0;filter:blur(1.5px)"></div>
<div class="a" style="left:48px;top:84px;width:32px;height:7px;background:#c8d0e0;transform:rotate(-35deg);filter:blur(2px);opacity:0.55"></div>
<div class="a" style="left:135px;top:93px;width:20px;height:44px;background:#1a1018;border-radius:50%;filter:blur(3px);"></div>
<div class="a" style="left:88px;top:28px;width:58px;height:68px;background:radial-gradient(ellipse at 50% 45%,#d2ae9a 0,#c49a84 60%,#9a7460 100%);border-radius:50%;filter:blur(1px);"></div>
<div class="a" style="left:91px;top:52px;width:24px;height:18px;border:2.6px solid #302424;border-radius:40%;filter:blur(0.7px)"></div>
<div class="a" style="left:118px;top:52px;width:26px;height:18px;border:2.6px solid #302424;border-radius:40%;filter:blur(0.7px)"></div>
<div class="a" style="left:106px;top:77px;width:20px;height:6px;background:#8a5a4a;border-radius:50%;filter:blur(1px);"></div>
<div class="a" style="left:84px;top:4px;width:62px;height:42px;background:#a01828;border-radius:45% 45% 12% 12%;filter:blur(1px)"></div>
<div class="a" style="left:12px;top:105px;width:25px;height:24px;background:rgba(80,80,80,0.55);border-radius:4px"></div>
<svg class="a" style="left:15px;top:108px" width="20" height="20" viewBox="0 0 20 20"><rect x="7.5" y="3" width="5" height="9" rx="2.5" fill="#eee"/><path d="M5 9.5 a5 5 0 0 0 10 0" stroke="#eee" fill="none" stroke-width="1.2"/><path d="M3 3 L17 17" stroke="#eee" stroke-width="1.3"/></svg>
</div>
<div class="a" style="left:1333.8px;top:698.3px;width:73px;height:73px;border-radius:50%;overflow:hidden;background:linear-gradient(180deg,#d6c89c 0,#c8b488 25%,#a8b0b0 45%,#90a8c0 60%,#3a78c8 78%,#2a68b8 100%)">
<div class="a" style="left:0px;top:38px;width:20px;height:35px;background:#c08070;filter:blur(3px);opacity:0.7"></div>
<div class="a" style="left:54px;top:38px;width:19px;height:35px;background:#a0b8b8;filter:blur(3px);opacity:0.7"></div>
<div class="a" style="left:26px;top:18px;width:22px;height:40px;background:#b8c0d0;border-radius:8px;filter:blur(1px)"></div>
<div class="a" style="left:30px;top:4px;width:13px;height:15px;background:#7a5040;border-radius:50%;filter:blur(0.5px)"></div>
<div class="a" style="left:26px;top:52px;width:20px;height:25px;background:#2a6cd0;filter:blur(1px)"></div>
</div>
<div class="a" style="left:1322.0px;top:785.0px;font-size:12.5px;line-height:12.5px;font-weight:normal;color:#e8e8e8;white-space:pre;transform:scaleX(0.9137);transform-origin:0 0;">RAJAN KU...</div>
<svg class="a" style="left:1402px;top:782px" width="18" height="18" viewBox="0 0 18 18"><rect x="6.5" y="2.5" width="5" height="8.5" rx="2.5" fill="none" stroke="#ddd" stroke-width="1.2"/><path d="M4 8.5 a5 5 0 0 0 10 0 M9 13.5 V16" stroke="#ddd" fill="none" stroke-width="1.2"/><path d="M2.5 2.5 L15.5 15.5" stroke="#ddd" stroke-width="1.3"/></svg>
<div class="a" style="left:1448.4px;top:695.8px;width:73.6px;height:73.6px;border-radius:50%;background:#3b3a39;border:1px solid #555"></div>
<div class="a" style="left:1472.0px;top:726.9px;font-size:14.5px;line-height:14.5px;font-weight:normal;color:#f0f0f0;white-space:pre;transform:scaleX(1.0245);transform-origin:0 0;">99+</div>
<div class="a" style="left:1453.5px;top:782.8px;font-size:12.5px;line-height:12.5px;font-weight:normal;color:#e8e8e8;white-space:pre;transform:scaleX(0.9647);transform-origin:0 0;">Participants</div>
<div class="a" style="left:0;top:850px;width:1600px;height:50px;background:linear-gradient(90deg,#d2f2ee 0,#ccf2f0 30%,#c9f1f1 60%,#cbf0f2 100%)"></div>
<div class="a" style="left:0;top:849px;width:1600px;height:1px;background:#131415"></div>
<svg class="a" style="left:19px;top:860px" width="30" height="28" viewBox="0 0 30 28"><path d="M12 2.5 a6.5 6.5 0 1 0 7.5 8.5 a5.5 5.5 0 0 1 -7.5 -8.5Z" fill="#f0a830"/><path d="M7 24.5 a5 5 0 0 1 -0.5 -10 a6.5 6.5 0 0 1 12.5 -1.5 a5 5 0 0 1 3.5 11.5Z" fill="#b8c8ec"/><path d="M7 24.5 a5 5 0 0 1 -0.5 -10 a6.5 6.5 0 0 1 12.5 -1.5" fill="#d4e0f6"/></svg>
<div class="a" style="left:54.0px;top:861.1px;font-size:12px;line-height:12px;font-weight:normal;color:#1a1a1a;white-space:pre;transform:scaleX(0.9138);transform-origin:0 0;">15°C</div>
<div class="a" style="left:54.0px;top:876.4px;font-size:12.5px;line-height:12.5px;font-weight:normal;color:#4a5a5a;white-space:pre;transform:scaleX(0.9768);transform-origin:0 0;">Smoke</div>
<svg class="a" style="left:282px;top:863px" width="25" height="25" viewBox="0 0 25 25"><defs><linearGradient id="wg" x1="0" y1="0" x2="1" y2="1"><stop offset="0" stop-color="#2ec0f8"/><stop offset="1" stop-color="#0a68d0"/></linearGradient></defs><rect x="0.5" y="0.5" width="11.3" height="11.3" rx="0.8" fill="url(#wg)"/><rect x="13" y="0.5" width="11.3" height="11.3" rx="0.8" fill="url(#wg)"/><rect x="0.5" y="13" width="11.3" height="11.3" rx="0.8" fill="url(#wg)"/><rect x="13" y="13" width="11.3" height="11.3" rx="0.8" fill="url(#wg)"/></svg>
<div class="a" style="left:322px;top:859.5px;width:102px;height:31px;border-radius:16px;background:#e9f8f8;border:1px solid #d8ecec"></div>
<svg class="a" style="left:344px;top:867px" width="17" height="17" viewBox="0 0 17 17"><circle cx="6.8" cy="6.8" r="5.3" fill="none" stroke="#222" stroke-width="1.6"/><path d="M10.6 10.6 L15 15" stroke="#222" stroke-width="1.7"/></svg>
<div class="a" style="left:365.7px;top:868.2px;font-size:13.5px;line-height:13.5px;font-weight:normal;color:#202020;white-space:pre;transform:scaleX(0.8486);transform-origin:0 0;">Search</div>
<svg class="a" style="left:439px;top:863px" width="26" height="25" viewBox="0 0 26 25"><rect x="7" y="1" width="17" height="16" rx="1.5" fill="#f4f4f4" stroke="#dcdcdc" stroke-width="0.8"/><rect x="1" y="7" width="16" height="16" rx="1.5" fill="#2a2a2a"/><rect x="7" y="7" width="10" height="10" fill="#c8c8c8"/></svg>
<svg class="a" style="left:484px;top:862px" width="26" height="27" viewBox="0 0 26 27"><defs><linearGradient id="mg" x1="0" y1="0" x2="1" y2="1"><stop offset="0" stop-color="#8a58d8"/><stop offset="1" stop-color="#5a4ad0"/></linearGradient></defs><path d="M13 1.5 a11.5 11.5 0 1 1 -7 20.5 L1.5 25 L3 18.5 A11.5 11.5 0 0 1 13 1.5Z" fill="url(#mg)"/><rect x="7" y="9" width="9" height="8" rx="1.5" fill="#fff"/><path d="M16.5 11.5 L20 9.5 V16.5 L16.5 14.5Z" fill="#fff"/></svg>
<svg class="a" style="left:531px;top:862px" width="25" height="26" viewBox="0 0 25 26"><rect x="0" y="0.5" width="25" height="25" fill="#1f9ccc"/><path d="M8 5 H12.5 V17 H19 V21 H8Z" fill="#fff"/><path d="M8 21 L5 24 H16 L19 21Z" fill="#134a8a"/></svg>
<svg class="a" style="left:576px;top:862px" width="27" height="26" viewBox="0 0 27 26"><rect x="9" y="1" width="17" height="20" fill="#e33" /><rect x="10.5" y="3" width="14" height="6" fill="#3aaaba"/><rect x="1" y="5" width="17" height="20" fill="#fff" stroke="#222" stroke-width="1.2"/><rect x="11" y="10" width="14" height="13" fill="#fff" stroke="#222" stroke-width="1"/><path d="M4 22 V12 M7 22 V15 M10 22 V13" stroke="#222" stroke-width="1.2"/><path d="M8 22 V16" stroke="#2a8a3a" stroke-width="1.4"/><path d="M12 22 V17" stroke="#d33" stroke-width="1.4"/></svg>
<svg class="a" style="left:623px;top:862px" width="24" height="26" viewBox="0 0 24 26"><defs><linearGradient id="m3" x1="0" y1="0" x2="1" y2="1"><stop offset="0" stop-color="#5a7ae8"/><stop offset="0.5" stop-color="#8a6ad8"/><stop offset="1" stop-color="#c86ac8"/></linearGradient></defs><path d="M12 1 L22.5 7 V19 L12 25 L1.5 19 V7Z" fill="url(#m3)"/><circle cx="12" cy="13" r="4" fill="#cdeeee"/><path d="M14 9 L22.5 7 V12Z" fill="#4ac0e8" opacity="0.8"/></svg>
<svg class="a" style="left:668px;top:862px" width="25" height="26" viewBox="0 0 25 26"><circle cx="12.5" cy="13" r="11.8" fill="#e8e8e8"/><path d="M12.5 1.2 A11.8 11.8 0 0 1 24 10 L12.5 13Z" fill="#f4a020"/><path d="M24 10 A11.8 11.8 0 0 1 21 21 L12.5 13Z" fill="#f06a2a"/><path d="M21 21 A11.8 11.8 0 0 1 4 21 L12.5 13Z" fill="#2a9a3a"/><path d="M4 21 A11.8 11.8 0 0 1 1.5 9 L12.5 13Z" fill="#e8e8e8"/><path d="M1.5 9 A11.8 11.8 0 0 1 12.5 1.2 L12.5 13Z" fill="#8a5ad0"/><circle cx="12.5" cy="13" r="5" fill="#fff"/></svg>
<svg class="a" style="left:714px;top:862px" width="26" height="27" viewBox="0 0 26 27"><path d="M12 2 C5 2 1 7 1 13 C1 19 5 24 10 24 C13 24 13 21 12 19 C11 17 13 16 15 16 C20 16 23 13 23 9 C23 5 18 2 12 2Z" fill="#3aa8e0"/><circle cx="6" cy="12" r="2.2" fill="#e84a3a"/><circle cx="9" cy="6.5" r="2.2" fill="#f4c020"/><circle cx="15" cy="6" r="2.2" fill="#3ab04a"/><path d="M22 5 L15 22" stroke="#a8783a" stroke-width="2"/><circle cx="9" cy="17" r="1.8" fill="#cdeeee"/></svg>
<svg class="a" style="left:759px;top:862px" width="26" height="26" viewBox="0 0 26 26"><path d="M1 8 L23 2 L24 6 L2 12Z" fill="#9a5ad8"/><rect x="1" y="10" width="24" height="15" rx="2" fill="#7a48d0"/><rect x="1" y="15" width="16" height="5" fill="#a878e8"/></svg>
<svg class="a" style="left:805px;top:862px" width="26" height="26" viewBox="0 0 26 26"><rect x="0.5" y="0.5" width="25" height="25" rx="12" fill="#1a5ce8"/><text x="13" y="15.5" font-family="Liberation Sans" font-size="6.5" fill="#fff" text-anchor="middle">zoom</text></svg>
<svg class="a" style="left:852px;top:864px" width="25" height="24" viewBox="0 0 25 24"><rect x="1" y="1" width="13" height="12" fill="none" stroke="#e05a3a" stroke-width="2" stroke-dasharray="2.5 1.5"/><rect x="3" y="3" width="10" height="9" fill="#ece8e8"/><path d="M12 8 L14 15 L20 14" stroke="#888" stroke-width="1.5" fill="none"/><circle cx="12.5" cy="19.5" r="2.5" fill="none" stroke="#2a9ad8" stroke-width="1.5"/><circle cx="21" cy="13" r="2.5" fill="none" stroke="#2a9ad8" stroke-width="1.5"/></svg>
<div class="a" style="left:861px;top:892px;width:7px;height:3px;border-radius:2px;background:#6a7a7a"></div>
<div class="a" style="left:890px;top:854.5px;width:41px;height:41px;border-radius:5px;background:#f6dcdc"></div>
<svg class="a" style="left:895px;top:862px" width="30" height="27" viewBox="0 0 30 27"><circle cx="19" cy="7" r="3.5" fill="#6a6ad0"/><rect x="12" y="10" width="13" height="13" rx="6" fill="#7b7fd8"/><circle cx="12" cy="5" r="4" fill="#7b7fd8"/><rect x="1" y="8" width="13" height="13" rx="1.5" fill="#4a4eb8"/><text x="7.5" y="18.5" font-family="Liberation Sans" font-weight="bold" font-size="10" fill="#fff" text-anchor="middle">T</text></svg>
<svg class="a" style="left:912px;top:859px" width="17" height="17" viewBox="0 0 17 17"><circle cx="8.5" cy="8.5" r="7.5" fill="#c42a3a" stroke="#f6dcdc" stroke-width="1"/><text x="8.5" y="12.5" font-family="Liberation Sans" font-weight="bold" font-size="11" fill="#fff" text-anchor="middle">5</text></svg>
<div class="a" style="left:901px;top:892px;width:17px;height:3px;border-radius:2px;background:#c42a2a"></div>
<svg class="a" style="left:942px;top:865px" width="24" height="18" viewBox="0 0 24 18"><path d="M1.5 10 L6 6 L10 10 L20 1 L23 4 L10 16 L6 16 Z" fill="#2a7ae0"/><path d="M1.5 10 L6 6 L10 10 L10 16Z" fill="#1a4ab8"/></svg>
<svg class="a" style="left:956px;top:857px" width="18" height="18" viewBox="0 0 18 18"><circle cx="9" cy="9" r="8.2" fill="#1f6f7a"/><text x="9" y="13" font-family="Liberation Sans" font-size="11" fill="#fff" text-anchor="middle">3</text></svg>
<svg class="a" style="left:991px;top:862px" width="20" height="26" viewBox="0 0 20 26"><rect x="0.5" y="0.5" width="19" height="25" rx="2" fill="#707a84"/><rect x="2.5" y="2.5" width="15" height="5" fill="#5ac8f0"/><g fill="#f0f0f0"><rect x="2.5" y="10" width="4" height="3.5"/><rect x="8" y="10" width="4" height="3.5"/><rect x="13.5" y="10" width="4" height="3.5"/><rect x="2.5" y="15" width="4" height="3.5"/><rect x="8" y="15" width="4" height="3.5"/><rect x="2.5" y="20" width="4" height="3.5"/><rect x="8" y="20" width="4" height="3.5"/></g><rect x="13.5" y="15" width="4" height="8.5" fill="#1a4a8a"/></svg>
<svg class="a" style="left:1034px;top:863px" width="27" height="24" viewBox="0 0 27 24"><path d="M1 3 a2 2 0 0 1 2 -2 H9 L12 4 H24 a2 2 0 0 1 2 2 V21 a2 2 0 0 1 -2 2 H3 a2 2 0 0 1 -2 -2Z" fill="#e8b020"/><rect x="1" y="6" width="25" height="17" rx="1.5" fill="#f8d040"/><rect x="7" y="16" width="13" height="7" rx="1" fill="#1a78d0"/></svg>
<div class="a" style="left:1044px;top:892px;width:7px;height:3px;border-radius:2px;background:#6a7a7a"></div>
<svg class="a" style="left:1080px;top:862px" width="27" height="27" viewBox="0 0 27 27"><circle cx="13" cy="13" r="12" fill="#e84a3a"/><path d="M13 13 L2.6 19 A12 12 0 0 0 13 25 Z" fill="#2aa84a"/><path d="M13 13 L23.4 19 A12 12 0 0 1 13 25 Z M13 13 L25 13 A12 12 0 0 1 23.4 19Z" fill="#f4c020"/><path d="M13 13 L2.6 19 A12 12 0 0 1 1 13 L13 13Z" fill="#2aa84a"/><circle cx="13" cy="13" r="5.5" fill="#fff"/><circle cx="13" cy="13" r="4.2" fill="#3a7ae8"/></svg>
<svg class="a" style="left:1093px;top:856px" width="19" height="19" viewBox="0 0 19 19"><circle cx="9.5" cy="9.5" r="8.5" fill="#8a6a60" stroke="#d8d8d8" stroke-width="1"/><circle cx="9.5" cy="8" r="4" fill="#a07868"/><path d="M5 4 Q9.5 1 14 4 L13 6 H6Z" fill="#222"/></svg>
<div class="a" style="left:1089px;top:892px;width:7px;height:3px;border-radius:2px;background:#6a7a7a"></div>
<svg class="a" style="left:1126px;top:862px" width="27" height="27" viewBox="0 0 27 27"><circle cx="13" cy="13" r="12" fill="#e84a3a"/><path d="M13 13 L2.6 19 A12 12 0 0 0 13 25 Z" fill="#2aa84a"/><path d="M13 13 L23.4 19 A12 12 0 0 1 13 25 Z M13 13 L25 13 A12 12 0 0 1 23.4 19Z" fill="#f4c020"/><path d="M13 13 L2.6 19 A12 12 0 0 1 1 13 L13 13Z" fill="#2aa84a"/><circle cx="13" cy="13" r="5.5" fill="#fff"/><circle cx="13" cy="13" r="4.2" fill="#3a7ae8"/></svg>
<svg class="a" style="left:1139px;top:856px" width="19" height="19" viewBox="0 0 19 19"><circle cx="9.5" cy="9.5" r="8.5" fill="#e0d8d0" stroke="#c8c8c8" stroke-width="1"/><circle cx="9.5" cy="8" r="3.5" fill="#c89888"/><path d="M6 4.5 Q9.5 2 13 4.5 L12.5 6 H6.5Z" fill="#222"/><path d="M5 18 L9.5 12 L14 18Z" fill="#c8202a"/></svg>
<div class="a" style="left:1135px;top:892px;width:7px;height:3px;border-radius:2px;background:#6a7a7a"></div>
<svg class="a" style="left:1172px;top:863px" width="26" height="24" viewBox="0 0 26 24"><rect x="6" y="0.5" width="19" height="23" rx="1.5" fill="#2a70d8"/><rect x="6" y="6" width="19" height="6" fill="#1a5ab8"/><rect x="6" y="12" width="19" height="6" fill="#1a4aa0"/><rect x="0.5" y="5" width="13" height="13" rx="1.5" fill="#1a4ab0"/><text x="7" y="15.3" font-family="Liberation Sans" font-weight="bold" font-size="9.5" fill="#fff" text-anchor="middle">W</text></svg>
<div class="a" style="left:1181px;top:892px;width:7px;height:3px;border-radius:2px;background:#6a7a7a"></div>
<svg class="a" style="left:1217px;top:862px" width="26" height="26" viewBox="0 0 26 26"><circle cx="14" cy="13" r="11.5" fill="#e8603a"/><path d="M14 1.5 A11.5 11.5 0 0 1 25.5 13 H14Z" fill="#f8885a"/><rect x="0.5" y="6" width="13" height="13" rx="1.5" fill="#c43a1a"/><text x="7" y="16.3" font-family="Liberation Sans" font-weight="bold" font-size="9.5" fill="#fff" text-anchor="middle">P</text></svg>
<div class="a" style="left:1227px;top:892px;width:7px;height:3px;border-radius:2px;background:#6a7a7a"></div>
<svg class="a" style="left:1270px;top:866px" width="18" height="14" viewBox="0 0 18 14"><path d="M2.5 11 L9 4.5 L15.5 11" stroke="#222" stroke-width="1.4" fill="none"/></svg>
<svg class="a" style="left:1295px;top:866px" width="19" height="17" viewBox="0 0 19 17"><circle cx="13" cy="4" r="2.6" fill="#7b7fd8"/><rect x="1" y="4" width="9" height="9" rx="1" fill="#4a4eb8"/><text x="5.5" y="11.5" font-family="Liberation Sans" font-weight="bold" font-size="7" fill="#fff" text-anchor="middle">T</text><circle cx="13" cy="11" r="5" fill="#d03a4a"/><path d="M10.5 12.5 H15.5 L14.5 11 V9.5 a1.5 1.5 0 0 0 -3 0 V11Z" fill="#fff"/></svg>
<div class="a" style="left:1317.4px;top:855px;width:31.5px;height:40px;border-radius:4px;background:#1e6b70"></div>
<svg class="a" style="left:1323px;top:864px" width="20" height="22" viewBox="0 0 20 22"><rect x="7" y="1" width="6" height="11" rx="3" fill="#fff"/><path d="M4 9 a6 6 0 0 0 12 0 M10 15 V19" stroke="#fff" stroke-width="1.4" fill="none"/></svg>
<div class="a" style="left:1361.5px;top:861.5px;font-size:12.3px;line-height:12.3px;font-weight:normal;color:#1a1a1a;white-space:pre;transform:scaleX(0.8856);transform-origin:0 0;">ENG</div>
<div class="a" style="left:1367.0px;top:877.2px;font-size:12.3px;line-height:12.3px;font-weight:normal;color:#1a1a1a;white-space:pre;transform:scaleX(0.9759);transform-origin:0 0;">IN</div>
<svg class="a" style="left:1402px;top:866px" width="21" height="16" viewBox="0 0 21 16"><path d="M1.5 6 a12.5 12.5 0 0 1 18 0" stroke="#1a1a1a" stroke-width="1.3" fill="none"/><path d="M4.3 8.8 a8.5 8.5 0 0 1 12.4 0" stroke="#1a1a1a" stroke-width="1.3" fill="none"/><path d="M7.2 11.6 a4.5 4.5 0 0 1 6.6 0" stroke="#1a1a1a" stroke-width="1.3" fill="none"/><circle cx="10.5" cy="14" r="1.2" fill="#1a1a1a"/></svg>
<svg class="a" style="left:1427px;top:866px" width="21" height="17" viewBox="0 0 21 17"><path d="M2 6 H5 L9.5 2 V15 L5 11 H2Z" stroke="#1a1a1a" stroke-width="1.2" fill="none"/><path d="M12 5.5 a4 4 0 0 1 0 6 M14.5 3.5 a7 7 0 0 1 0 10 M17 1.5 a10 10 0 0 1 0 14" stroke="#1a1a1a" stroke-width="1.2" fill="none"/></svg>
<svg class="a" style="left:1452px;top:865px" width="21" height="16" viewBox="0 0 21 16"><rect x="2" y="4.5" width="15" height="9.5" rx="1.5" stroke="#1a1a1a" stroke-width="1.2" fill="none"/><rect x="17" y="7.5" width="2" height="3.5" fill="#1a1a1a"/><rect x="3.5" y="6" width="12" height="6.5" fill="#1a1a1a"/><path d="M5 1 L3 5 H6 L4 9" stroke="#1a1a1a" stroke-width="1" fill="none"/></svg>
<div class="a" style="left:1523.3px;top:860.0px;font-size:12.5px;line-height:12.5px;font-weight:normal;color:#1a1a1a;white-space:pre;transform:scaleX(0.8632);transform-origin:0 0;">20:51</div>
<div class="a" style="left:1488.6px;top:876.5px;font-size:12.5px;line-height:12.5px;font-weight:normal;color:#1a1a1a;white-space:pre;transform:scaleX(0.9634);transform-origin:0 0;">28-01-2023</div>
<svg class="a" style="left:1561px;top:866px" width="19" height="19" viewBox="0 0 19 19"><circle cx="9.4" cy="9" r="8.3" fill="#1b5e6b"/><text x="9.4" y="12.8" font-family="Liberation Sans" font-size="10.5" fill="#fff" text-anchor="middle">2</text></svg>
</body></html>
